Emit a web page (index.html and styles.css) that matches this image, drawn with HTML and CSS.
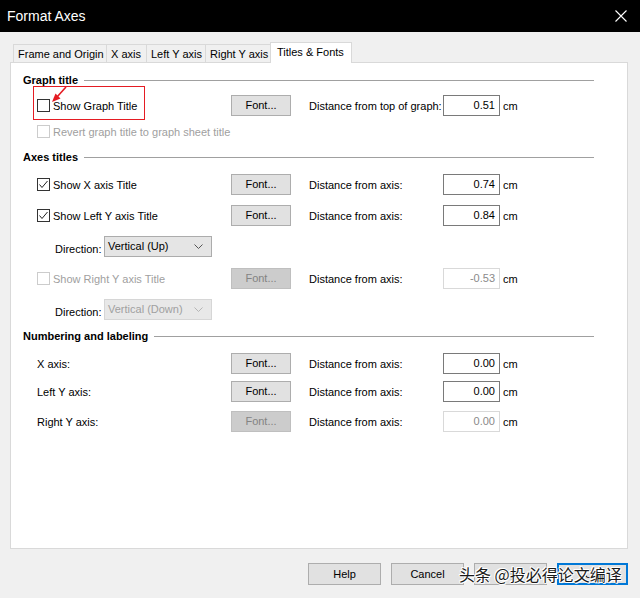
FILE: index.html
```html
<!DOCTYPE html>
<html>
<head>
<meta charset="utf-8">
<title>Format Axes</title>
<link rel="stylesheet" href="styles.css">
</head>
<body>
<div class="window">
  <div class="titlebar">
    <span class="title">Format Axes</span>
    <svg class="close" width="12" height="12" viewBox="0 0 12 12"><path d="M0.5 0.5 L11.5 11.5 M11.5 0.5 L0.5 11.5" stroke="#fff" stroke-width="1.1" fill="none"/></svg>
  </div>

  <div class="tabs">
    <div class="tab t1">Frame and Origin</div>
    <div class="tab t2">X axis</div>
    <div class="tab t3">Left Y axis</div>
    <div class="tab t4">Right Y axis</div>
    <div class="tab active">Titles &amp; Fonts</div>
  </div>

  <div class="panel">
    <div class="group-head"><span>Graph title</span><i></i></div>
    <div class="row r-g1">
      <div class="left annot">
        <span class="cb"></span><span class="lbl">Show Graph Title</span>
        <span class="redbox"></span>
        <svg class="arrow" width="20" height="20" viewBox="0 0 20 20"><path d="M17 1 L8 11" stroke="#e51c23" stroke-width="1.6" fill="none"/><path d="M3 16 L6.5 7.5 L11.5 12.5 Z" fill="#e51c23"/></svg>
      </div>
      <button class="btn">Font...</button>
      <span></span>
      <span class="dlbl">Distance from top of graph:</span>
      <span class="inp">0.51</span>
      <span class="unit">cm</span>
    </div>
    <div class="row r-g2">
      <div class="left dis"><span class="cb off"></span><span class="lbl">Revert graph title to graph sheet title</span></div>
    </div>

    <div class="group-head h2"><span>Axes titles</span><i></i></div>
    <div class="row r-a1">
      <div class="left"><span class="cb on"><svg width="11" height="11" viewBox="0 0 11 11"><path d="M1.5 5.5 L4 8.5 L9.5 2" stroke="#222" stroke-width="1" fill="none"/></svg></span><span class="lbl">Show X axis Title</span></div>
      <button class="btn">Font...</button>
      <span></span>
      <span class="dlbl">Distance from axis:</span>
      <span class="inp">0.74</span>
      <span class="unit">cm</span>
    </div>
    <div class="row r-a2">
      <div class="left"><span class="cb on"><svg width="11" height="11" viewBox="0 0 11 11"><path d="M1.5 5.5 L4 8.5 L9.5 2" stroke="#222" stroke-width="1" fill="none"/></svg></span><span class="lbl">Show Left Y axis Title</span></div>
      <button class="btn">Font...</button>
      <span></span>
      <span class="dlbl">Distance from axis:</span>
      <span class="inp">0.84</span>
      <span class="unit">cm</span>
    </div>
    <div class="dir r-d1">
      <span class="dirlbl">Direction:</span>
      <div class="select"><span>Vertical (Up)</span><svg width="9" height="5" viewBox="0 0 9 5"><path d="M0.5 0.5 L4.5 4.5 L8.5 0.5" stroke="#555" fill="none"/></svg></div>
    </div>
    <div class="row r-a3">
      <div class="left dis"><span class="cb off"></span><span class="lbl">Show Right Y axis Title</span></div>
      <button class="btn off">Font...</button>
      <span></span>
      <span class="dlbl">Distance from axis:</span>
      <span class="inp off">-0.53</span>
      <span class="unit">cm</span>
    </div>
    <div class="dir r-d2">
      <span class="dirlbl">Direction:</span>
      <div class="select off"><span>Vertical (Down)</span><svg width="9" height="5" viewBox="0 0 9 5"><path d="M0.5 0.5 L4.5 4.5 L8.5 0.5" stroke="#b5b5b5" fill="none"/></svg></div>
    </div>

    <div class="group-head h3"><span>Numbering and labeling</span><i></i></div>
    <div class="row r-n1">
      <div class="left"><span class="lbl plain">X axis:</span></div>
      <button class="btn">Font...</button>
      <span></span>
      <span class="dlbl">Distance from axis:</span>
      <span class="inp">0.00</span>
      <span class="unit">cm</span>
    </div>
    <div class="row r-n2">
      <div class="left"><span class="lbl plain">Left Y axis:</span></div>
      <button class="btn">Font...</button>
      <span></span>
      <span class="dlbl">Distance from axis:</span>
      <span class="inp">0.00</span>
      <span class="unit">cm</span>
    </div>
    <div class="row r-n3">
      <div class="left"><span class="lbl plain">Right Y axis:</span></div>
      <button class="btn off">Font...</button>
      <span></span>
      <span class="dlbl">Distance from axis:</span>
      <span class="inp off">0.00</span>
      <span class="unit">cm</span>
    </div>
  </div>

  <div class="footer">
    <button class="fbtn">Help</button>
    <button class="fbtn">Cancel</button>
    <button class="fbtn apply">Apply</button>
    <button class="fbtn ok">OK</button>
  </div>

  <div class="watermark">头条 @投必得论文编译</div>
</div>
</body>
</html>
```

FILE: styles.css
```css
* { box-sizing: border-box; }
html, body { margin: 0; padding: 0; }
body {
  width: 640px;
  height: 598px;
  overflow: hidden;
  background: #f0f0f0;
  font-family: "Liberation Sans", Arial, sans-serif;
  font-size: 11px;
  color: #000;
}
.window { position: relative; width: 640px; height: 598px; }

.titlebar {
  height: 32px;
  background: #000;
  color: #fff;
  display: flex;
  align-items: center;
  justify-content: space-between;
  padding: 0 13px 0 7px;
}
.title { font-size: 14px; }
.close { display: block; }

.tabs {
  display: flex;
  align-items: flex-end;
  height: 20px;
  margin: 10px 0 0 13px;
  position: relative;
  z-index: 2;
}
.tab {
  height: 18px;
  line-height: 18px;
  border: 1px solid #d9d9d9;
  border-bottom: none;
  border-right: none;
  padding-left: 4px;
  white-space: nowrap;
  background: #f0f0f0;
  overflow: hidden;
}
.t1 { width: 93px; }
.t2 { width: 40px; }
.t3 { width: 59px; }
.t4 { width: 65px; padding-left: 4px; }
.tab.active {
  height: 21px;
  width: 82px;
  margin-bottom: -1px;
  background: #fff;
  border-right: 1px solid #d9d9d9;
  padding-left: 6px;
  line-height: 19px;
}

.panel {
  margin-left: 10px;
  width: 618px;
  height: 487px;
  background: #fff;
  border: 1px solid #d9d9d9;
  padding: 10px 33px 0 12px;
  position: relative;
}

.group-head {
  display: flex;
  align-items: center;
  height: 14px;
  font-weight: bold;
}
.group-head i {
  flex: 1;
  height: 1px;
  background: #a0a0a0;
  margin-left: 6px;
  margin-top: 1px;
}
.h2 { margin-top: 8px; }
.h3 { margin-top: 9px; }

.row {
  display: grid;
  grid-template-columns: 194px 60px 18px 134px 57px auto;
  align-items: center;
  height: 21px;
  margin-left: 14px;
}
.r-g1 { margin-top: 8px; }
.r-g2 { margin-top: 5px; }
.r-a1 { margin-top: 10px; }
.r-a2 { margin-top: 10px; }
.r-a3 { margin-top: 11px; }
.r-n1 { margin-top: 10px; }
.r-n2 { margin-top: 7px; }
.r-n3 { margin-top: 9px; }

.left {
  display: flex;
  align-items: center;
  height: 21px;
  white-space: nowrap;
}
.left .lbl { margin-left: 3px; }
.left .lbl.plain { margin-left: 0; }
.left.dis { color: #a0a0a0; }

.cb {
  width: 13px;
  height: 13px;
  border: 1px solid #333;
  background: #fff;
  display: flex;
  align-items: center;
  justify-content: center;
  flex: none;
}
.cb svg { display: block; }
.cb.off { border-color: #cccccc; }

.annot { position: relative; }
.redbox {
  position: absolute;
  left: -4px;
  top: -9px;
  width: 112px;
  height: 34px;
  border: 1px solid #e51c23;
}
.arrow {
  position: absolute;
  left: 12px;
  top: -9px;
}

.btn {
  width: 60px;
  height: 21px;
  padding: 0;
  margin: 0;
  font: inherit;
  color: #000;
  background: #e1e1e1;
  border: 1px solid #adadad;
  text-align: center;
  line-height: 19px;
}
.btn.off {
  background: #cccccc;
  border-color: #bfbfbf;
  color: #838383;
}

.dlbl { white-space: nowrap; }
.inp {
  width: 57px;
  height: 21px;
  border: 1px solid #7a7a7a;
  text-align: right;
  padding-right: 4px;
  line-height: 18px;
}
.inp.off { border-color: #d9d9d9; color: #8a8a8a; }
.unit { margin-left: 3px; }

.dir {
  display: flex;
  align-items: center;
  height: 21px;
  margin-left: 32px;
  margin-top: 10px;
}
.dirlbl { width: 49px; position: relative; top: 2px; }
.select {
  width: 108px;
  height: 21px;
  background: #e5e5e5;
  border: 1px solid #acacac;
  display: flex;
  align-items: center;
  justify-content: space-between;
  padding: 0 8px 0 3px;
}
.select span { position: relative; top: -1px; }
.select.off { background: #e8e8e8; border-color: #d6d6d6; color: #a0a0a0; }

.footer {
  display: flex;
  justify-content: flex-end;
  gap: 10px;
  padding-right: 12px;
  margin-top: 14px;
}
.fbtn {
  width: 73px;
  height: 22px;
  padding: 0;
  margin: 0;
  font: inherit;
  color: #000;
  background: #e1e1e1;
  border: 1px solid #adadad;
}
.fbtn.apply { color: #838383; }
.fbtn.ok { border: 2px solid #0078d7; width: 71px; }

.watermark {
  position: absolute;
  left: 459px;
  top: 563px;
  font-family: "Noto Sans CJK SC", "Noto Sans", sans-serif;
  font-size: 16px;
  line-height: 22px;
  color: #1a1a1a;
  white-space: nowrap;
  text-shadow: -1px 0 #fff, 1px 0 #fff, 0 -1px #fff, 0 1px #fff, 1px 1px #fff, -1px -1px #fff;
}
```
